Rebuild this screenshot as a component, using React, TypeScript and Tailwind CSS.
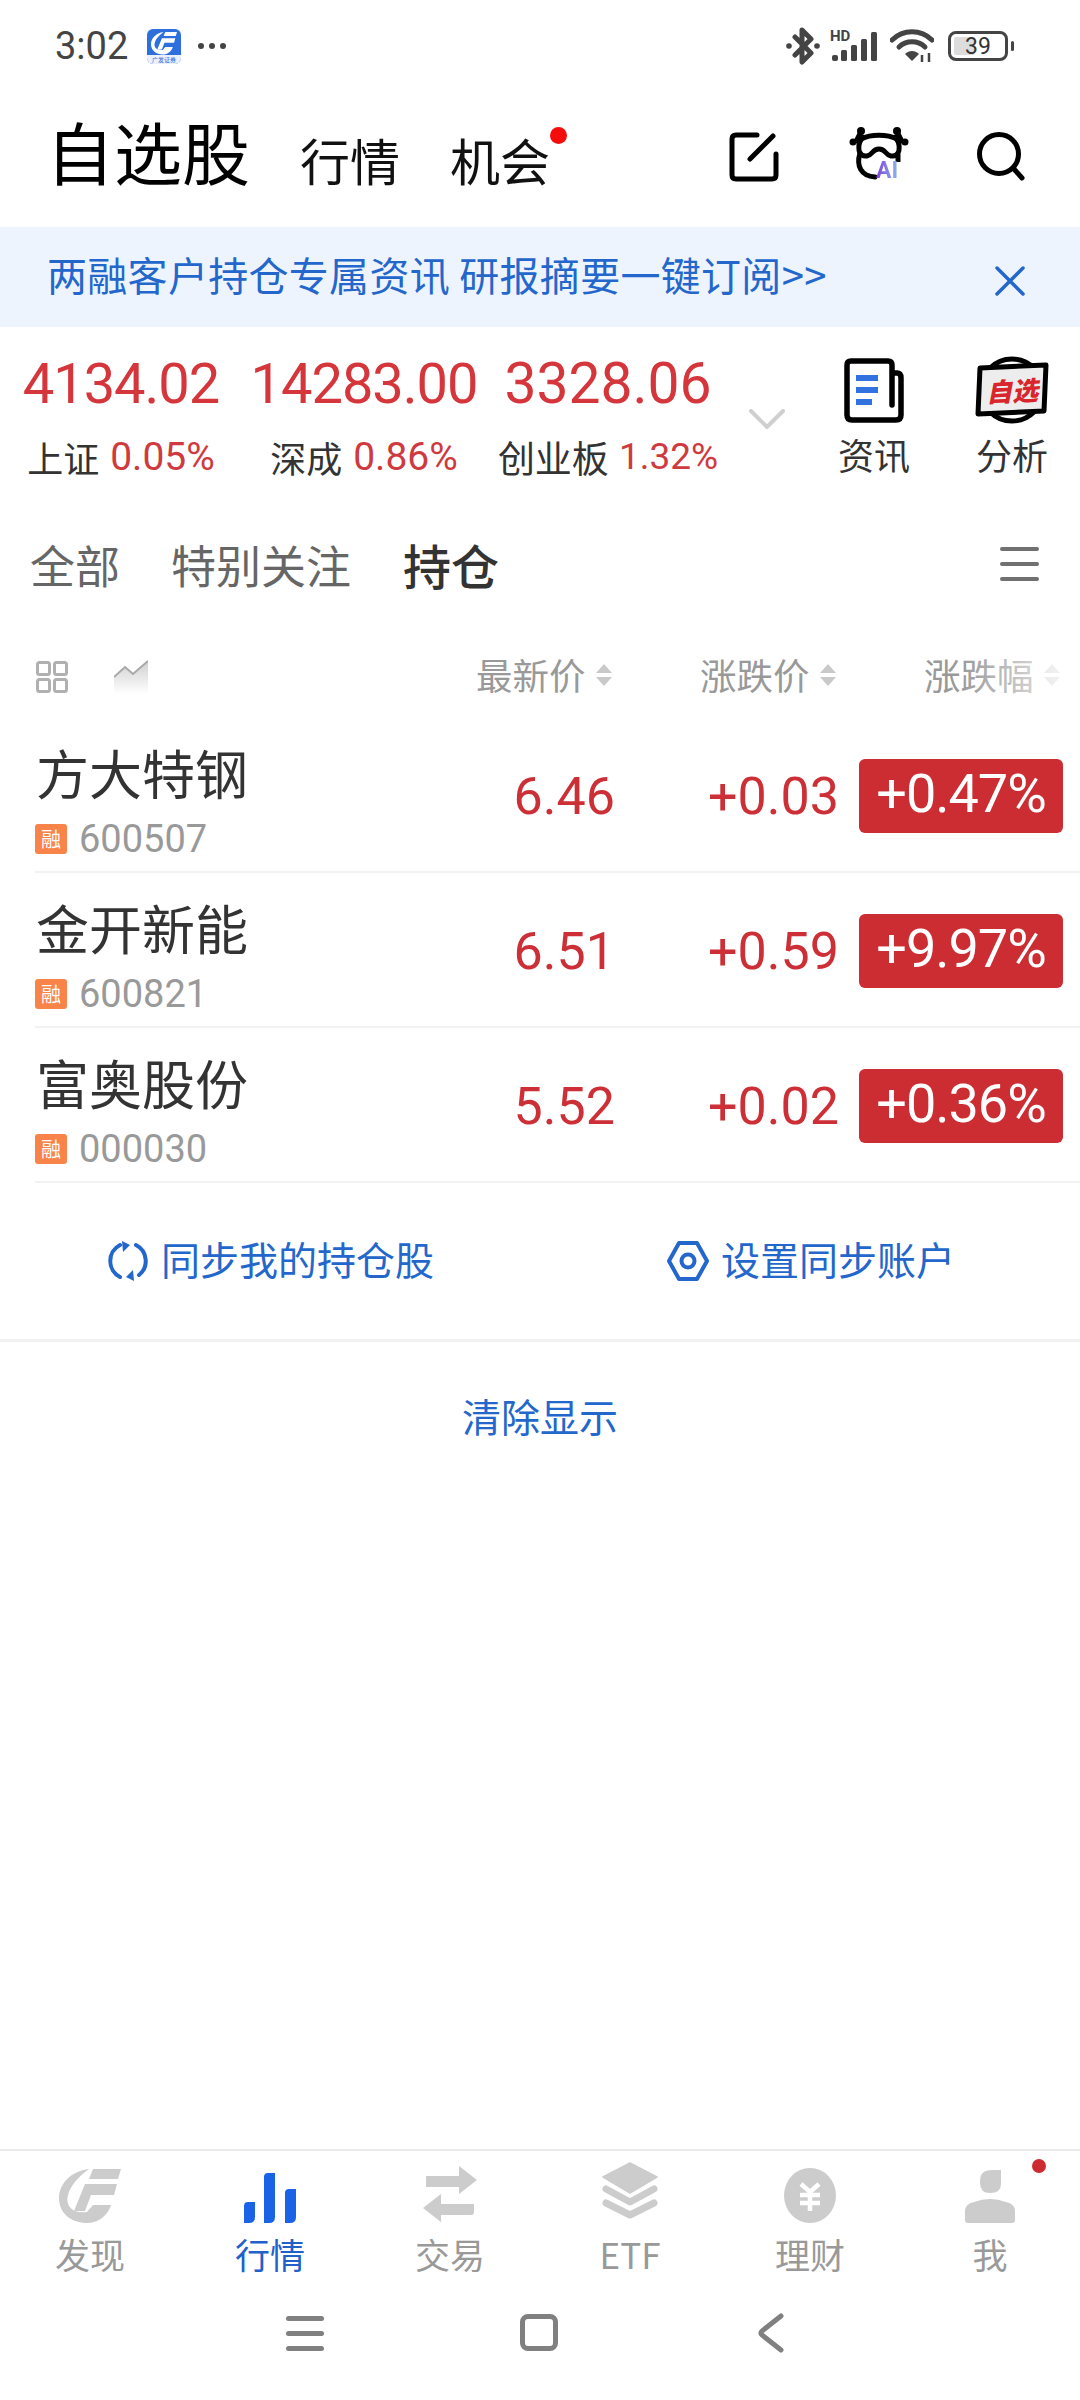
import React from "react";

function SortArrows() {
  return (
    <svg width="18" height="24" viewBox="0 0 18 24" className="shrink-0">
      <path d="M9 1 L17 10 H1 Z" fill="#c9c9c9" />
      <path d="M1 14 H17 L9 23 Z" fill="#c9c9c9" />
    </svg>
  );
}

function Row({ name, code, price, change, pct }: { name: string; code: string; price: string; change: string; pct: string }) {
  return (
    <div className="h-[155px] ml-[35px] border-b-2 border-[#f2f2f2] flex items-center">
      <div className="w-[330px] flex flex-col mt-[10px]">
        <div className="text-[53px] leading-[52px] text-[#333333] ml-[1px]">{name}</div>
        <div className="flex items-center mt-[26px]">
          <div className="w-[32px] h-[30px] rounded-[3px] bg-[#f9844a] text-white text-[20px] leading-[30px] text-center">融</div>
          <div className="ml-[12px] text-[38px] leading-[30px] text-[#999999] font-['Roboto',sans-serif]">{code}</div>
        </div>
      </div>
      <div className="w-[250px] text-right text-[52px] leading-none text-[#cc2f36] font-['Roboto',sans-serif] mt-[4px]">{price}</div>
      <div className="w-[224px] text-right text-[52px] leading-none text-[#cc2f36] font-['Roboto',sans-serif] mt-[4px]">{change}</div>
      <div className="ml-[20px] w-[204px] h-[74px] rounded-[6px] bg-[#cb2d33] text-white text-[54px] tracking-[-1px] leading-[70px] text-center font-['Roboto',sans-serif] mt-[2px]">{pct}</div>
    </div>
  );
}

function NavItem({ label, active, children }: { label: string; active?: boolean; children: React.ReactNode }) {
  return (
    <div className="w-[180px] flex flex-col items-center">
      <div className="h-[72px] flex items-end justify-center">{children}</div>
      <div className={`mt-[13px] text-[35px] leading-[36px] ${active ? "text-[#2060c8]" : "text-[#999999]"}`}>{label}</div>
    </div>
  );
}

function AppLogo() {
  return (
    <div className="w-[34px] h-[35px] rounded-[6px] bg-[#2d6fdc] overflow-hidden flex flex-col items-center">
      <svg width="26" height="24" viewBox="0 0 62 55" className="mt-[2px]">
        <path d="M30 1 C12 3 0 16 0 30 C0 46 13 55 28 55 C40 55 49 47 52 37 H34 L28 44 C14 46 6 38 9 27 C11 18 20 8 30 1 Z M34 1 H62 L59 11 H30 Z M26 16 H58 L55 27 H32 L26 43 H15 Z" fill="#ffffff" />
      </svg>
      <div className="w-full h-[9px] bg-[#eaf1fc] mt-auto text-[6px] leading-[9px] text-center text-[#2d6fdc]">广发证券</div>
    </div>
  );
}

export default function App() {
  return (
    <div className="w-[1080px] h-[2400px] bg-white flex flex-col overflow-hidden relative font-['Noto_Sans_CJK_SC','Noto_Sans',sans-serif]">
      {/* status bar */}
      <div className="h-[92px] shrink-0 flex items-center pl-[55px] pr-[66px] text-[#444444]">
        <div className="text-[38px] leading-none font-['Roboto',sans-serif] w-[72px]">3:02</div>
        <div className="ml-[20px]"><AppLogo /></div>
        <svg width="32" height="8" viewBox="0 0 32 8" className="ml-[16px]">
          <circle cx="4" cy="4" r="3" fill="#444" />
          <circle cx="15" cy="4" r="3" fill="#444" />
          <circle cx="26" cy="4" r="3" fill="#444" />
        </svg>
        <div className="ml-auto flex items-center">
          <svg width="34" height="38" viewBox="0 0 34 38">
            <path d="M9 10 L25 26 L16 35 V3 L25 12 L9 28" fill="none" stroke="#444" strokeWidth="5" strokeLinejoin="round" strokeLinecap="round" />
            <circle cx="3" cy="19" r="2.8" fill="#444" />
            <circle cx="31" cy="19" r="2.8" fill="#444" />
          </svg>
          <div className="ml-[10px] w-[48px] h-[32px] relative">
            <div className="absolute left-0 top-[-3px] text-[15px] leading-[18px] font-bold text-[#444444] font-['Roboto',sans-serif]">HD</div>
            <svg width="48" height="32" viewBox="0 0 48 32">
              <rect x="2" y="25" width="6" height="6" rx="2" fill="#444" />
              <rect x="11" y="20" width="6" height="11" rx="1.5" fill="#444" />
              <rect x="21" y="15" width="6" height="16" rx="1.5" fill="#444" />
              <rect x="31" y="9" width="6" height="22" rx="1.5" fill="#444" />
              <rect x="41" y="2" width="6" height="29" rx="1.5" fill="#444" />
            </svg>
          </div>
          <svg width="44" height="34" viewBox="0 0 44 34" className="ml-[12px]">
            <path d="M2 11 C13 0 31 0 42 11" fill="none" stroke="#444" strokeWidth="5" strokeLinecap="round" />
            <path d="M9 18 C16 11 28 11 35 18" fill="none" stroke="#444" strokeWidth="5" strokeLinecap="round" />
            <path d="M15 25 C19 21 25 21 29 25 L22 32 Z" fill="#444" />
            <path d="M32 26 V33 M39 24 V33" stroke="#444" strokeWidth="2.5" />
          </svg>
          <div className="ml-[14px] w-[60px] h-[30px] rounded-[8px] border-[3px] border-[#444444] relative flex items-center justify-center overflow-hidden">
            <div className="absolute left-[3px] top-[3px] bottom-[3px] w-[21px] bg-[#dddddd] rounded-[2px]"></div>
            <div className="relative text-[23px] leading-none text-[#333333] font-['Roboto',sans-serif]">39</div>
          </div>
          <div className="ml-[3px] w-[3px] h-[10px] rounded-[2px] bg-[#444444]"></div>
        </div>
      </div>

      {/* header */}
      <div className="h-[135px] shrink-0 flex items-end pb-[43px] pl-[46px] relative">
        <div className="text-[68px] leading-[66px] text-black">自选股</div>
        <div className="ml-[50px] text-[50px] leading-[50px] text-[#111111]">行情</div>
        <div className="ml-[50px] text-[50px] leading-[50px] text-[#111111] relative">
          机会
          <div className="absolute right-[-17px] top-[-7px] w-[17px] h-[17px] rounded-full bg-[#f50d0d]"></div>
        </div>
        <div className="ml-auto flex items-end pr-[55px] mb-[2px]">
          <svg width="50" height="50" viewBox="0 0 50 50">
            <path d="M28 3 H7 Q3 3 3 7 V43 Q3 47 7 47 H43 Q47 47 47 43 V22" fill="none" stroke="#000" strokeWidth="5" strokeLinecap="round" />
            <path d="M21 27 L44 4" fill="none" stroke="#000" strokeWidth="5" strokeLinecap="round" />
          </svg>
          <div className="ml-[70px] w-[60px] h-[56px] relative">
            <svg width="60" height="56" viewBox="0 0 60 56">
              <path d="M12 13 C22 8 38 8 48 13" fill="none" stroke="#000" strokeWidth="5" />
              <path d="M11 14 C8 25 11 31 18 30 C24 29 23 23 30 23 C37 23 36 29 42 30 C49 31 52 25 49 14" fill="none" stroke="#000" strokeWidth="5" />
              <path d="M11 27 C7 40 12 50 26 51" fill="none" stroke="#000" strokeWidth="5" strokeLinecap="round" />
              <path d="M49 28 L49 36" fill="none" stroke="#000" strokeWidth="5" />
              <circle cx="12" cy="5" r="4" fill="#000" />
              <circle cx="48" cy="5" r="4" fill="#000" />
              <circle cx="4" cy="16" r="3.5" fill="#000" />
              <circle cx="56" cy="16" r="3.5" fill="#000" />
              <path d="M9 6 L17 10 L12 19 L4 16 Z M51 6 L43 10 L48 19 L56 16 Z" fill="#000" />
            </svg>
            <div className="absolute left-[27px] top-[33px] text-[23px] leading-[23px] font-bold font-['Roboto',sans-serif] text-transparent bg-clip-text bg-linear-to-r from-[#7a3fd8] to-[#8ab4f0]">AI</div>
          </div>
          <svg width="48" height="50" viewBox="0 0 48 50" className="ml-[68px]">
            <circle cx="22" cy="22" r="19.5" fill="none" stroke="#000" strokeWidth="5" />
            <path d="M37 37 L45 46" fill="none" stroke="#000" strokeWidth="5" strokeLinecap="round" />
          </svg>
        </div>
      </div>

      {/* banner */}
      <div className="h-[100px] shrink-0 bg-[#eef4fd] flex items-center pl-[47px] pr-[55px] text-[40px] tracking-[0.3px] leading-none text-[#2467cc]">
        <div className="mb-[6px]">两融客户持仓专属资讯 研报摘要一键订阅&gt;&gt;</div>
        <svg width="30" height="30" viewBox="0 0 30 30" className="ml-auto mt-[8px]">
          <path d="M2 2 L28 28 M28 2 L2 28" stroke="#2467cc" strokeWidth="3.5" strokeLinecap="round" />
        </svg>
      </div>

      {/* indices */}
      <div className="h-[173px] shrink-0 pt-[32px] pl-[25px] flex">
        {[
          { n: "4134.02", l: "上证", p: "0.05%", w: "w-[192px]", m: "", num: "text-[56px] tracking-[-1px]", lab: "text-[36px]", pc: "text-[39px] ml-[11px]" },
          { n: "14283.00", l: "深成", p: "0.86%", w: "w-[222px]", m: "ml-[36px]", num: "text-[56px] tracking-[-1px]", lab: "text-[36px]", pc: "text-[39px] ml-[11px]" },
          { n: "3328.06", l: "创业板", p: "1.32%", w: "w-[216px]", m: "ml-[25px]", num: "text-[57px]", lab: "text-[37px]", pc: "text-[37px] ml-[10px]" },
        ].map((x) => (
          <div key={x.n} className={`${x.w} ${x.m} flex flex-col items-center`}>
            <div className={`${x.num} leading-[50px] text-[#d5363b] whitespace-nowrap font-['Roboto',sans-serif]`}>{x.n}</div>
            <div className="mt-[28px] flex items-center leading-[40px] whitespace-nowrap">
              <span className={`${x.lab} text-[#333333]`}>{x.l}</span>
              <span className={`${x.pc} text-[#cf3a40] font-['Roboto',sans-serif]`}>{x.p}</span>
            </div>
          </div>
        ))}
        <svg width="36" height="20" viewBox="0 0 36 20" className="ml-[33px] mt-[50px]">
          <path d="M2 2 L18 18 L34 2" fill="none" stroke="#cfcfcf" strokeWidth="4" strokeLinecap="round" />
        </svg>
        <div className="ml-[39px] w-[100px] flex flex-col items-center">
          <svg width="60" height="66" viewBox="0 0 60 66" className="mt-[-1px]">
            <path d="M49 15 H53 Q57 15 57 20 V57 Q57 62 52 62 H8 Q3 62 3 57 V7 Q3 3 7 3 H44 Q48 3 48 7 V47" fill="none" stroke="#000" strokeWidth="5.5" strokeLinecap="round" />
            <rect x="12" y="17" width="22" height="6" fill="#3272e0" />
            <rect x="12" y="29" width="22" height="6" fill="#3272e0" />
            <rect x="12" y="41" width="16" height="6" fill="#3272e0" />
          </svg>
          <div className="mt-[10px] text-[36px] leading-[40px] text-[#333333]">资讯</div>
        </div>
        <div className="ml-[38px] w-[100px] flex flex-col items-center">
          <div className="w-[74px] h-[70px] relative mt-[-4px]">
            <svg width="74" height="70" viewBox="0 0 74 70">
              <circle cx="37" cy="35" r="31" fill="#fff" stroke="#000" strokeWidth="5" />
              <path d="M5 13 L71 10 L69 56 L3 59 Z" fill="#ededed" stroke="#000" strokeWidth="5" strokeLinejoin="round" />
            </svg>
            <div className="absolute inset-0 flex items-center justify-center text-[26px] leading-none font-black italic text-[#d8262c] -rotate-3">自选</div>
          </div>
          <div className="mt-[9px] text-[36px] leading-[40px] text-[#333333]">分析</div>
        </div>
      </div>

      {/* tabs */}
      <div className="h-[136px] shrink-0 flex items-center pl-[30px] pr-[41px] pb-[8px]">
        <div className="text-[45px] leading-none text-[#666666]">全部</div>
        <div className="ml-[51px] text-[45px] leading-none text-[#666666]">特别关注</div>
        <div className="ml-[52px] text-[48px] leading-none text-[#333333] font-medium">持仓</div>
        <div className="ml-auto w-[39px] flex flex-col gap-[11px]">
          <div className="h-[4px] rounded-full bg-[#707070]"></div>
          <div className="h-[4px] rounded-full bg-[#707070]"></div>
          <div className="h-[4px] rounded-full bg-[#707070]"></div>
        </div>
      </div>

      {/* column header */}
      <div className="h-[82px] shrink-0 flex items-center pl-[36px] relative">
        <svg width="32" height="32" viewBox="0 0 32 32">
          <rect x="1.5" y="1.5" width="12" height="12" rx="2" fill="none" stroke="#b0b0b0" strokeWidth="3" />
          <rect x="18.5" y="1.5" width="12" height="12" rx="2" fill="none" stroke="#b0b0b0" strokeWidth="3" />
          <rect x="1.5" y="18.5" width="12" height="12" rx="2" fill="none" stroke="#b0b0b0" strokeWidth="3" />
          <rect x="18.5" y="18.5" width="12" height="12" rx="2" fill="none" stroke="#b0b0b0" strokeWidth="3" />
        </svg>
        <svg width="34" height="34" viewBox="0 0 34 34" className="ml-[46px]">
          <defs>
            <linearGradient id="area" x1="0" x2="0" y1="0" y2="1">
              <stop offset="0" stopColor="#d0d0d0" />
              <stop offset="1" stopColor="#ffffff" />
            </linearGradient>
          </defs>
          <path d="M0 17 L11 7 L19 14 L34 1 V34 H0 Z" fill="url(#area)" />
          <path d="M0 17 L11 7 L19 14 L34 1" fill="none" stroke="#a8a8a8" strokeWidth="2" />
        </svg>
        <div className="ml-[328px] w-[136px] shrink-0 flex items-center whitespace-nowrap text-[36.5px] leading-none text-[#999999] mb-[4px]">
          最新价<span className="ml-[9px]"><SortArrows /></span>
        </div>
        <div className="ml-[88px] w-[136px] shrink-0 flex items-center whitespace-nowrap text-[36.5px] leading-none text-[#999999] mb-[4px]">
          涨跌价<span className="ml-[9px]"><SortArrows /></span>
        </div>
        <div className="ml-[88px] w-[136px] shrink-0 flex items-center whitespace-nowrap text-[36.5px] leading-none text-[#999999] mb-[4px]">
          涨跌幅<span className="ml-[9px]"><SortArrows /></span>
        </div>
        <div className="absolute right-0 top-0 bottom-0 w-[120px] bg-linear-to-r from-white/0 to-white/90"></div>
      </div>

      {/* rows */}
      <Row name="方大特钢" code="600507" price="6.46" change="+0.03" pct="+0.47%" />
      <Row name="金开新能" code="600821" price="6.51" change="+0.59" pct="+9.97%" />
      <Row name="富奥股份" code="000030" price="5.52" change="+0.02" pct="+0.36%" />

      {/* sync */}
      <div className="h-[156px] shrink-0 flex items-center text-[39px] leading-none text-[#2467cc]">
        <svg width="42" height="42" viewBox="0 0 42 42" className="ml-[107px]">
          <path d="M13 5 A18 18 0 0 0 13 37" fill="none" stroke="#2467cc" strokeWidth="4" strokeLinecap="round" />
          <path d="M29 5 A18 18 0 0 1 32 35" fill="none" stroke="#2467cc" strokeWidth="4" strokeLinecap="round" />
          <path d="M27 41 L19 37 L26 30" fill="#2467cc" />
          <path d="M15 1 L23 5 L16 12" fill="#2467cc" />
        </svg>
        <div className="ml-[12px] mb-[5px]">同步我的持仓股</div>
        <svg width="42" height="42" viewBox="0 0 42 42" className="ml-[233px]">
          <path d="M12 3 H30 L40 21 L30 39 H12 L2 21 Z" fill="none" stroke="#2467cc" strokeWidth="4" strokeLinejoin="round" />
          <circle cx="21" cy="21" r="6.5" fill="none" stroke="#2467cc" strokeWidth="4" />
        </svg>
        <div className="ml-[12px] mb-[5px]">设置同步账户</div>
      </div>
      <div className="h-[3px] shrink-0 bg-[#f1f1f1]"></div>
      <div className="h-[152px] shrink-0 flex items-center justify-center text-[39px] leading-none text-[#2467cc] pb-[5px]">清除显示</div>

      <div className="flex-1"></div>

      {/* bottom nav */}
      <div className="h-[251px] shrink-0 border-t-2 border-[#ebebeb] flex flex-col relative">
        <div className="flex">
          <NavItem label="发现">
            <svg width="62" height="55" viewBox="0 0 62 55">
              <path d="M30 1 C12 3 0 16 0 30 C0 46 13 55 28 55 C40 55 49 47 52 37 H34 L28 44 C14 46 6 38 9 27 C11 18 20 8 30 1 Z M34 1 H62 L59 11 H30 Z M26 16 H58 L55 27 H32 L26 43 H15 Z" fill="#cccccc" />
            </svg>
          </NavItem>
          <NavItem label="行情" active>
            <svg width="52" height="52" viewBox="0 0 52 52">
              <path d="M0 35 Q0 31 4 31 H11 V46 Q11 52 5 52 H0 Z M20 6 Q20 2 24 2 H31 V46 Q31 52 25 52 H20 Z M41 22 Q41 18 45 18 H52 V46 Q52 52 46 52 H41 Z" fill="#1a62e6" />
            </svg>
          </NavItem>
          <NavItem label="交易">
            <svg width="56" height="58" viewBox="0 0 56 58">
              <path d="M4 11 H37 V1 L55 15 L37 29 V22 H4 Z" fill="#cccccc" />
              <path d="M52 39 H19 V29 L1 43 L19 57 V50 H49 Q52 50 52 47 Z" fill="#cccccc" />
            </svg>
          </NavItem>
          <NavItem label="ETF">
            <svg width="56" height="58" viewBox="0 0 56 58" className="mb-[3px]">
              <path d="M28 1 L55 15 L28 31 L1 15 Z" fill="#cccccc" stroke="#cccccc" strokeWidth="1.5" strokeLinejoin="round" />
              <path d="M4 27 L28 40 L52 27" fill="none" stroke="#cccccc" strokeWidth="7" strokeLinecap="round" strokeLinejoin="round" />
              <path d="M4 41 L28 53 L52 41" fill="none" stroke="#cccccc" strokeWidth="7" strokeLinecap="round" strokeLinejoin="round" />
            </svg>
          </NavItem>
          <NavItem label="理财">
            <svg width="52" height="55" viewBox="0 0 52 55">
              <ellipse cx="26" cy="27.5" rx="26" ry="27.5" fill="#cccccc" />
              <path d="M17 16 L26 24 L35 16 M16 27 H36 M16 35 H36 M26 25 V43" fill="none" stroke="#ffffff" strokeWidth="4.5" />
            </svg>
          </NavItem>
          <NavItem label="我">
            <svg width="52" height="54" viewBox="0 0 52 54">
              <path d="M16 12 Q16 1 28 1 H37 V15 Q37 24 26 24 Q16 24 16 14 Z" fill="#cccccc" />
              <path d="M1 42 Q1 35 10 33 Q26 27 42 33 Q51 35 51 42 V51 Q51 54 48 54 H4 Q1 54 1 51 Z" fill="#cccccc" />
            </svg>
          </NavItem>
        </div>
        <div className="absolute left-[1032px] top-[8px] w-[14px] h-[14px] rounded-full bg-[#cc2b31]"></div>

        {/* system nav */}
        <div className="flex-1 flex items-start pt-[42px] pl-[286px]">
          <div className="w-[38px] flex flex-col gap-[10px] mt-[2px]">
            <div className="h-[5px] rounded-full bg-[#808080]"></div>
            <div className="h-[5px] rounded-full bg-[#808080]"></div>
            <div className="h-[5px] rounded-full bg-[#808080]"></div>
          </div>
          <div className="ml-[196px] w-[38px] h-[37px] rounded-[8px] border-[5px] border-[#808080]"></div>
          <svg width="26" height="40" viewBox="0 0 26 40" className="ml-[200px] mt-[-1px]">
            <path d="M23 3 L4 18 Q2 20 4 22 L23 37" fill="none" stroke="#808080" strokeWidth="5" strokeLinecap="round" />
          </svg>
        </div>
      </div>
    </div>
  );
}
